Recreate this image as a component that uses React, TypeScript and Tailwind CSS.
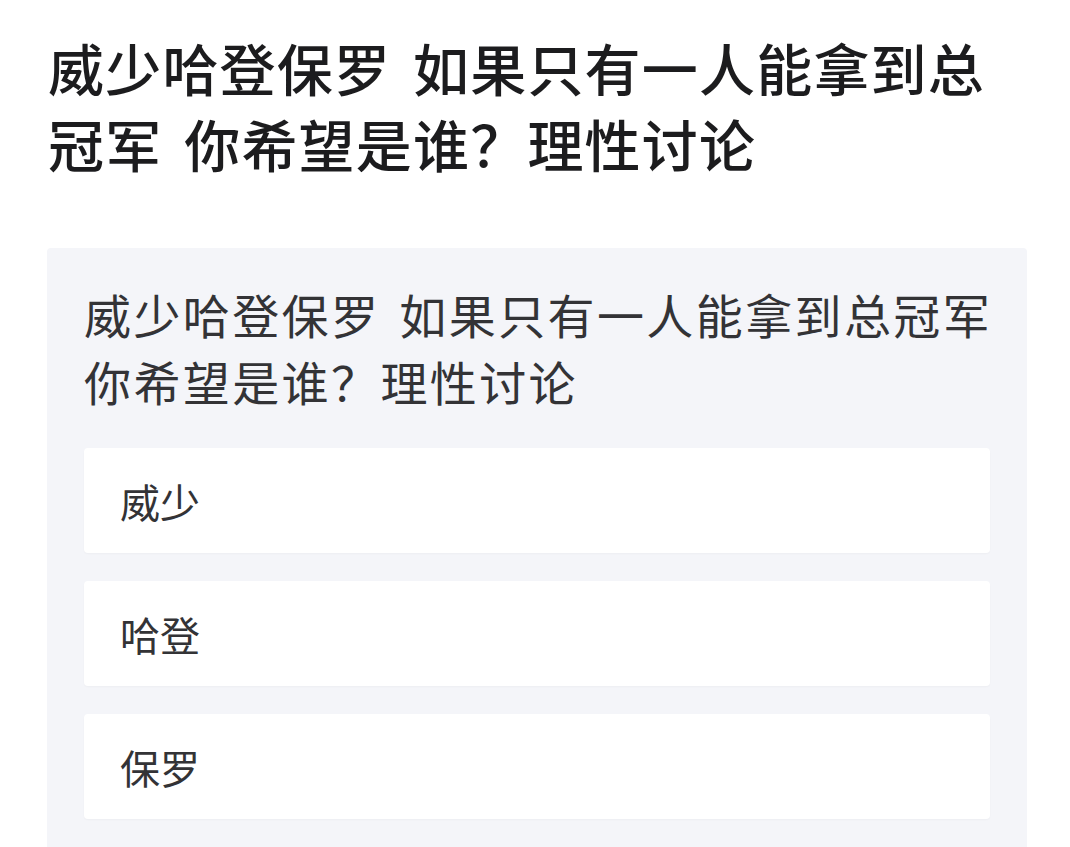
export default function App() {
  const options = ["威少", "哈登", "保罗"];
  return (
    <div
      className="w-[1070px] h-[847px] overflow-hidden bg-white"
      style={{ fontFamily: '"Noto Sans CJK SC", "Noto Sans", sans-serif' }}
    >
      <h1 className="pl-[48px] pr-[60px] pt-[29px] text-[56px] leading-[76px] tracking-[1.2px] [word-spacing:8px] font-medium text-[#1c1c1e]">
        威少哈登保罗 如果只有一人能拿到总冠军 你希望是谁？理性讨论
      </h1>
      <div className="mt-[67px] ml-[47px] mr-[43px] rounded-[4px] bg-[#f4f5f9] pl-[37px] pr-[37px] pt-[32px] pb-[40px]">
        <p className="-mr-[16px] text-[47px] leading-[67px] tracking-[2.4px] [word-spacing:6px] text-[#333336]">
          威少哈登保罗 如果只有一人能拿到总冠军 你希望是谁？理性讨论
        </p>
        <div className="mt-[34px] flex flex-col gap-[28px]">
          {options.map((o) => (
            <div
              key={o}
              className="h-[105px] rounded-[4px] bg-white flex items-center pl-[36px] text-[40px] text-[#333336] shadow-[0_1px_2px_rgba(0,0,0,0.03)]"
            >
              {o}
            </div>
          ))}
        </div>
      </div>
    </div>
  );
}
